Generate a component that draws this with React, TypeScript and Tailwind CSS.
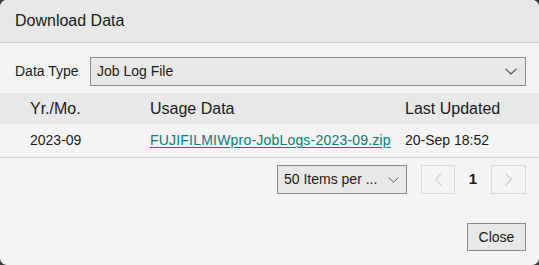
import React from 'react';

function Chevron({ className, dir = 'down' }: { className?: string; dir?: 'down' | 'left' | 'right' }) {
  if (dir === 'down') {
    return (
      <svg className={className} viewBox="0 0 12 7" fill="none" stroke="currentColor" strokeWidth="1.1">
        <path d="M0.5 0.8 L6 6 L11.5 0.8" />
      </svg>
    );
  }
  return (
    <svg className={className} viewBox="0 0 7 13" fill="none" stroke="currentColor" strokeWidth="1.1">
      <path d={dir === 'left' ? 'M6.3 0.5 L0.8 6.5 L6.3 12.5' : 'M0.7 0.5 L6.2 6.5 L0.7 12.5'} />
    </svg>
  );
}

export default function App() {
  return (
    <div className="w-[539px] h-[265px] bg-[#3a3a3a]">
      <div className="h-full rounded-[7px] overflow-hidden bg-[#f4f4f4] flex flex-col text-[#1a1a1a] font-['Liberation_Sans',Arial,sans-serif]">
        {/* Header */}
        <div className="h-[43px] shrink-0 flex items-center px-[15px] bg-[#e8e8e8] border-b border-[#cdcdcd] text-[16px]">
          Download Data
        </div>

        {/* Data type */}
        <div className="mt-[14px] flex items-center pl-[15px] pr-[13px] text-[14px]">
          <span className="w-[75px]">Data Type</span>
          <div className="flex-1 h-[29px] flex items-center justify-between pl-[6px] pr-[8px] bg-[#e8e8e8] border border-[#8a8a8a]">
            <span>Job Log File</span>
            <Chevron className="w-[12px] h-[7px] text-[#444]" />
          </div>
        </div>

        {/* Table */}
        <div className="mt-[7px]">
          <div className="h-[31px] grid grid-cols-[150px_255px_1fr] items-center bg-[#e8e8e8] text-[16px]">
            <span className="pl-[30px]">Yr./Mo.</span>
            <span>Usage Data</span>
            <span>Last Updated</span>
          </div>
          <div className="h-[34px] grid grid-cols-[150px_255px_1fr] items-center border-b border-[#d2d2d2] text-[14px]">
            <span className="pl-[30px]">2023-09</span>
            <a href="#" className="text-[#0b7a7c] underline underline-offset-[2px] tracking-[0.2px]">
              FUJIFILMIWpro-JobLogs-2023-09.zip
            </a>
            <span>20-Sep 18:52</span>
          </div>
        </div>

        {/* Pagination */}
        <div className="mt-[7px] flex items-center justify-end pr-[13px] text-[14px]">
          <div className="w-[130px] h-[29px] flex items-center justify-between pl-[6px] pr-[7px] bg-[#e8e8e8] border border-[#8a8a8a]">
            <span>50 Items per ...</span>
            <Chevron className="w-[11px] h-[6px] text-[#555]" />
          </div>
          <div className="ml-[14px] w-[34px] h-[29px] flex items-center justify-center border border-[#dadada]">
            <Chevron dir="left" className="w-[7px] h-[13px] text-[#c8c8c8]" />
          </div>
          <span className="w-[36px] text-center font-bold text-[15px]">1</span>
          <div className="w-[35px] h-[29px] flex items-center justify-center border border-[#dadada]">
            <Chevron dir="right" className="w-[7px] h-[13px] text-[#c8c8c8]" />
          </div>
        </div>

        {/* Footer */}
        <div className="mt-[29px] flex justify-end pr-[13px]">
          <button className="w-[59px] h-[28px] bg-[#e8e8e8] border border-[#8a8a8a] text-[14px] text-[#1a1a1a]">
            Close
          </button>
        </div>
      </div>
    </div>
  );
}
